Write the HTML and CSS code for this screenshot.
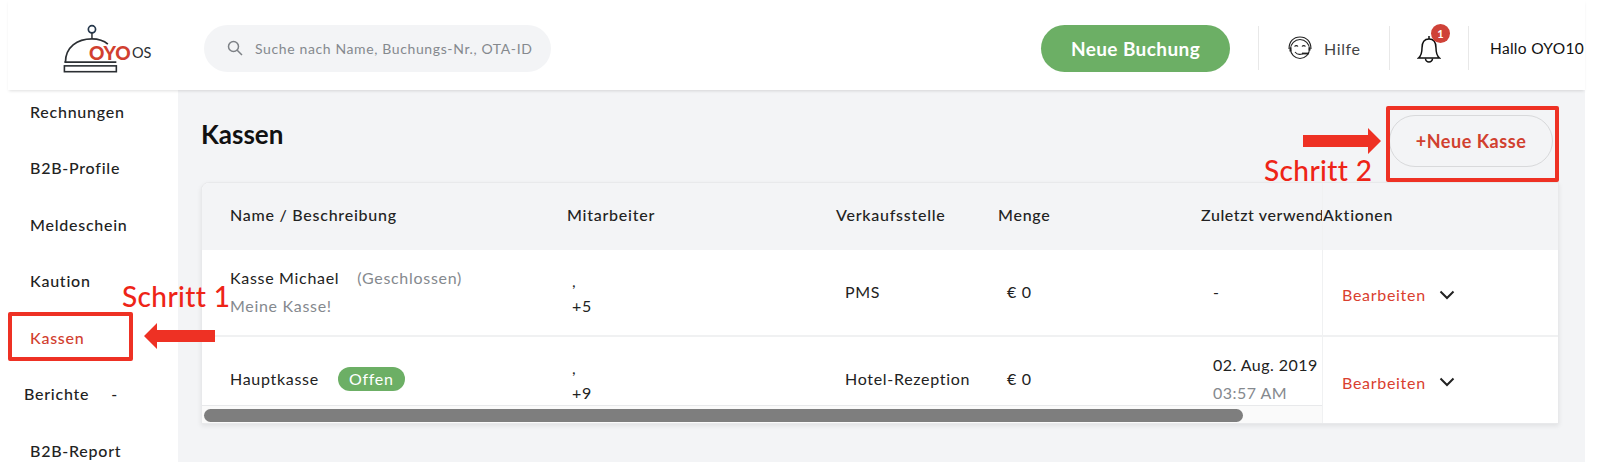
FILE: index.html
```html
<!DOCTYPE html>
<html lang="de">
<head>
<meta charset="utf-8">
<title>Kassen</title>
<link rel="stylesheet" href="styles.css">
</head>
<body>
<div class="app">
  <header class="topbar">
    <div class="logo">
      <svg class="logo-bell" width="77" height="53" viewBox="0 0 72 50" fill="none" stroke="#2b2f33">
        <circle cx="27" cy="5" r="3.4" stroke="#24364a" stroke-width="1.6"/>
        <path d="M27 8.500V14" stroke-width="1.4"/>
        <path d="M2 36C2 22 13 14 27 14c6 0 11 1.500 15 5" stroke-width="1.6"/>
        <path d="M1 36H50" stroke-width="1.6"/>
        <rect x="1" y="39.500" width="49" height="5.500" stroke-width="1.500"/>
      </svg>
      <span class="logo-oyo">OYO</span><span class="logo-os">OS</span>
    </div>
    <div class="search">
      <svg width="16" height="16" viewBox="0 0 16 16" fill="none" stroke="#7d8186" stroke-width="1.500"><circle cx="6.500" cy="6.500" r="5"/><path d="M10.200 10.200 15 15"/></svg>
      <span>Suche nach Name, Buchungs-Nr., OTA-ID</span>
    </div>
    <button class="btn-book">Neue Buchung</button>
    <div class="sep"></div>
    <div class="help">
      <svg width="26" height="26" viewBox="0 0 26 26" fill="none" stroke="#222" stroke-width="1.100">
        <circle cx="13" cy="14" r="9.500"/>
        <path d="M2 14C2 6.500 6.500 2 13 2s11 4.500 11 12"/>
        <path d="M3.500 12.500v4M22.500 12.500v3" stroke-width="2"/>
        <path d="M7.500 11.500c1-1.200 2.500-1.200 3.500 0M15 11.500c1-1.200 2.500-1.200 3.500 0"/>
        <path d="M8 17c2 2.500 5 3 8 1.500"/>
        <path d="M15 18.500h7" stroke-width="1.800"/>
      </svg>
      <span>Hilfe</span>
    </div>
    <div class="sep"></div>
    <div class="bell">
      <svg width="24" height="30" viewBox="0 0 24 30" fill="none" stroke="#111" stroke-width="1.500">
        <path d="M1.500 24c2.500-2 3.500-4 3.500-10S8 5 12 5s7 3 7 9 1 8 3.500 10Z"/>
        <path d="M12 5V2"/>
        <path d="M8.500 24.500a3.500 3.500 0 0 0 7 0"/>
      </svg>
      <span class="badge">1</span>
    </div>
    <div class="sep"></div>
    <div class="user">Hallo OYO10</div>
  </header>
  <div class="main">
    <nav class="sidebar">
      <a class="nav-item">Rechnungen</a>
      <a class="nav-item">B2B-Profile</a>
      <a class="nav-item">Meldeschein</a>
      <a class="nav-item">Kaution</a>
      <a class="nav-item active">Kassen</a>
      <a class="nav-item group">Berichte <span class="dash">-</span></a>
      <a class="nav-item">B2B-Report</a>
    </nav>
    <section class="content">
      <div class="title-row">
        <h1>Kassen</h1>
        <button class="btn-new">+Neue Kasse</button>
      </div>
      <div class="card">
        <div class="scroller">
          <div class="row head">
            <div class="cell">Name / Beschreibung</div>
            <div class="cell">Mitarbeiter</div>
            <div class="cell">Verkaufsstelle</div>
            <div class="cell">Menge</div>
            <div class="cell tight">Zuletzt verwend</div>
          </div>
          <div class="body">
            <div class="row">
              <div class="cell stack">
                <div><span>Kasse Michael</span><span class="muted status">(Geschlossen)</span></div>
                <div class="muted">Meine Kasse!</div>
              </div>
              <div class="cell people"><div>,</div><div>+5</div></div>
              <div class="cell ind">PMS</div>
              <div class="cell ind">€ 0</div>
              <div class="cell ind2">-</div>
            </div>
            <div class="row">
              <div class="cell"><span>Hauptkasse</span><span class="pill">Offen</span></div>
              <div class="cell people"><div>,</div><div>+9</div></div>
              <div class="cell ind">Hotel-Rezeption</div>
              <div class="cell ind">€ 0</div>
              <div class="cell stack ind2"><div>02. Aug. 2019</div><div class="muted">03:57 AM</div></div>
            </div>
          </div>
          <div class="track"><div class="thumb"></div></div>
        </div>
        <div class="actions">
          <div class="act head">Aktionen</div>
          <div class="act r1"><span class="edit">Bearbeiten</span><svg width="16" height="10" viewBox="0 0 16 10" fill="none" stroke="#222" stroke-width="2"><path d="M1.500 1.500 8 8l6.500-6.500"/></svg></div>
          <div class="act r2"><span class="edit">Bearbeiten</span><svg width="16" height="10" viewBox="0 0 16 10" fill="none" stroke="#222" stroke-width="2"><path d="M1.500 1.500 8 8l6.500-6.500"/></svg></div>
        </div>
      </div>
    </section>
  </div>
</div>
<div class="mark box-1"></div>
<div class="mark box-2"></div>
<svg class="mark arrow-1" width="71" height="26" viewBox="0 0 71 26"><path fill="#ee3124" d="M0 13 13 0v7h58v12H13v7Z"/></svg>
<svg class="mark arrow-2" width="78" height="26" viewBox="0 0 78 26"><path fill="#ee3124" d="M78 13 65 0v7H0v12h65v7Z"/></svg>
<div class="mark note note-1">Schritt 1</div>
<div class="mark note note-2">Schritt 2</div>
</body>
</html>
```
FILE: styles.css
```css
* { box-sizing: border-box; }
html, body { margin: 0; height: 466px; overflow: hidden; background: #fff; }
body { font-family: "Lato", "Noto Sans", sans-serif; color: #222; position: relative; }
.app { margin-left: 8px; width: 1577px; height: 462px; display: flex; flex-direction: column; }

.topbar { height: 90px; flex: none; display: flex; align-items: center; padding-top: 6px; position: relative; z-index: 2; background: #fff; box-shadow: 0 2px 3px -1px rgba(0,0,0,.13); }
.logo { width: 196px; height: 50px; flex: none; position: relative; }
.logo-bell { position: absolute; left: 55px; top: 1px; }
.logo-oyo { position: absolute; left: 81px; top: 20px; font-size: 19px; line-height: 20px; font-weight: 900; color: #d1402f; }
.logo-os { position: absolute; left: 124px; top: 21px; font-size: 14.500px; line-height: 18px; color: #2b2f33; }
.search { width: 347px; height: 47px; flex: none; border-radius: 24px; background: #f3f4f6; display: flex; align-items: center; gap: 12px; padding-left: 23px; color: #85898e; font-size: 14px; letter-spacing: .62px; white-space: nowrap; }
.btn-book { margin-left: 490px; width: 189px; height: 47px; flex: none; border: 0; border-radius: 24px; background: #6caf65; color: #fff; font: 700 19px "Lato", sans-serif; letter-spacing: .4px; }
.sep { width: 1px; height: 44px; flex: none; background: #e8e8e8; }
.btn-book + .sep { margin-left: 28px; }
.help { width: 130px; flex: none; display: flex; align-items: center; gap: 11px; padding-left: 28px; font-size: 16px; letter-spacing: .6px; color: #444; }
.bell { width: 78px; height: 44px; flex: none; position: relative; padding: 8px 0 0 27px; }
.bell svg { display: block; }
.badge { position: absolute; left: 41px; top: -2px; width: 19px; height: 19px; border-radius: 50%; background: #cf4238; color: #fff; font-size: 11px; font-weight: 700; line-height: 19px; text-align: center; }
.user { margin-left: 21px; font-size: 15.500px; letter-spacing: .3px; color: #111; white-space: nowrap; }

.main { flex: 1; min-height: 0; display: flex; }
.sidebar { width: 170px; flex: none; background: #fff; overflow: hidden; }
.nav-item { display: flex; align-items: center; height: 56.500px; padding-left: 22px; font-size: 16px; font-weight: 500; letter-spacing: .75px; color: #222; white-space: nowrap; position: relative; top: -7px; }
.nav-item.active { color: #d1402f; }
.nav-item.group { padding-left: 16px; }
.dash { margin-left: 22px; }

.content { flex: 1; min-width: 0; background: #f3f4f6; padding: 0 27px 0 23px; }
.title-row { height: 92px; display: flex; justify-content: space-between; align-items: flex-start; }
h1 { margin: 29px 0 0; font-size: 26px; line-height: 30px; font-weight: 700; color: #111; }
.btn-new { margin: 25px 5px 0 0; width: 164px; height: 52px; border: 1px solid #d8d9db; border-radius: 26px; background: transparent; color: #d1402f; font: 700 18px "Lato", sans-serif; letter-spacing: .55px; }

.card { height: 242px; display: flex; background: #fff; border: 1px solid #e8e9eb; border-radius: 8px 0 0 0; box-shadow: 0 2px 5px rgba(0,0,0,.08); overflow: hidden; margin-right: -1px; }
.scroller { flex: 1; min-width: 0; display: flex; flex-direction: column; }
.body { height: 156px; overflow: hidden; flex: none; border-bottom: 1px solid #e8e9eb; }
.row { display: grid; grid-template-columns: 337px 269px 162px 203px 121px; height: 87px; padding: 0 0 2px 28px; font-size: 16px; letter-spacing: .7px; border-bottom: 2px solid #f0f1f2; }
.row.head { height: 67px; padding-bottom: 5px; background: #f3f4f6; border: 0; font-weight: 500; letter-spacing: .75px; }
.cell { display: flex; align-items: center; white-space: nowrap; min-width: 0; }
.row.head .tight { letter-spacing: .6px; }
.stack { flex-direction: column; align-items: flex-start; justify-content: center; line-height: 28px; }
.people { flex-direction: column; align-items: flex-start; justify-content: center; line-height: 25px; padding: 2px 0 0 5px; }
.ind { padding-left: 9px; }
.ind2 { padding-left: 12px; letter-spacing: .45px; }
.muted { color: #85898e; }
.status { margin-left: 18px; }
.pill { margin-left: 19px; width: 67px; height: 24px; border-radius: 12px; background: #6caf65; color: #fff; text-align: center; line-height: 24px; }
.track { flex: 1; background: #fafafa; padding: 3px 0 0 2px; }
.thumb { width: 1039px; height: 13px; background: #7e7e7e; border-radius: 7px; }

.actions { width: 236px; flex: none; display: flex; flex-direction: column; font-size: 16px; letter-spacing: .7px; background: #fff; }
.act { border-left: 1px solid #f0f1f2; display: flex; align-items: center; gap: 13px; padding-left: 19px; }
.act.head { height: 67px; flex: none; padding-bottom: 5px; background: #f3f4f6; font-weight: 500; letter-spacing: .75px; padding-left: 0; }
.act.r1 { height: 87px; flex: none; padding-top: 4px; border-bottom: 2px solid #f0f1f2; }
.act.r2 { flex: 1; padding-top: 4px; }
.edit { color: #d9402f; }

.mark { position: absolute; z-index: 5; }
.box-1 { left: 8px; top: 312px; width: 125px; height: 49px; border: 4px solid #ee3124; border-radius: 2px; }
.box-2 { left: 1386px; top: 106px; width: 173px; height: 76px; border: 4px solid #ee3124; border-radius: 2px; }
.arrow-1 { left: 144px; top: 323px; }
.arrow-2 { left: 1303px; top: 128px; }
.note { color: #ee2417; font-size: 28px; line-height: 30px; font-weight: 500; letter-spacing: .4px; white-space: nowrap; }
.note-1 { left: 122px; top: 281px; }
.note-2 { left: 1264px; top: 155px; }
```
